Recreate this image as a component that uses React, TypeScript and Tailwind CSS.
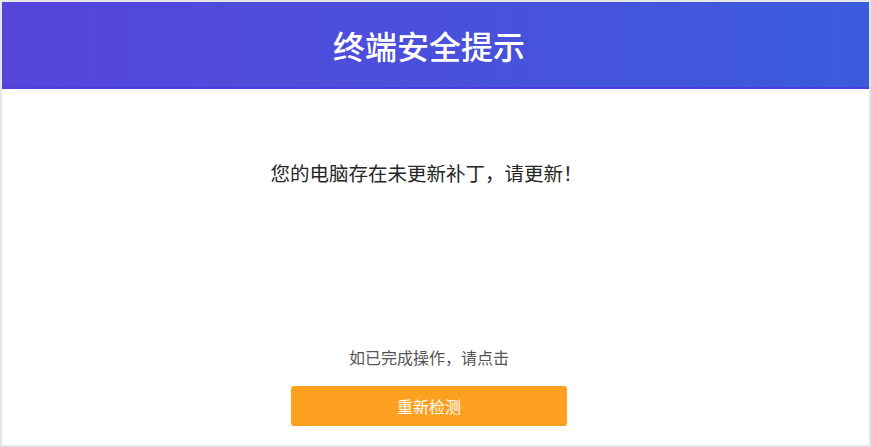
import React from 'react';

export default function App() {
  return (
    <div
      className="w-[871px] h-[447px] bg-[#e6e6e6] p-[2px]"
      style={{ fontFamily: '"Noto Sans CJK SC", "Noto Sans", sans-serif' }}
    >
      <div className="flex h-full flex-col bg-white">
        <div className="flex h-[87px] items-center justify-center border-b-2 border-[#4a40e0] bg-gradient-to-r from-[#5644db] to-[#3a5bdd] pr-[13px]">
          <h1 className="text-[32px] leading-none font-medium text-white">终端安全提示</h1>
        </div>

        <div className="flex flex-1 flex-col items-center pr-[13px] pt-[72px]">
          <p className="mr-[5px] text-[19.5px] leading-6 text-[#262626]">您的电脑存在未更新补丁，请更新！</p>

          <p className="mt-[160px] text-[16px] leading-6 text-[#555]">如已完成操作，请点击</p>

          <button className="mt-[17px] h-[40px] w-[276px] rounded-[3px] bg-[#fda020] text-[16px] text-white">
            重新检测
          </button>
        </div>
      </div>
    </div>
  );
}
